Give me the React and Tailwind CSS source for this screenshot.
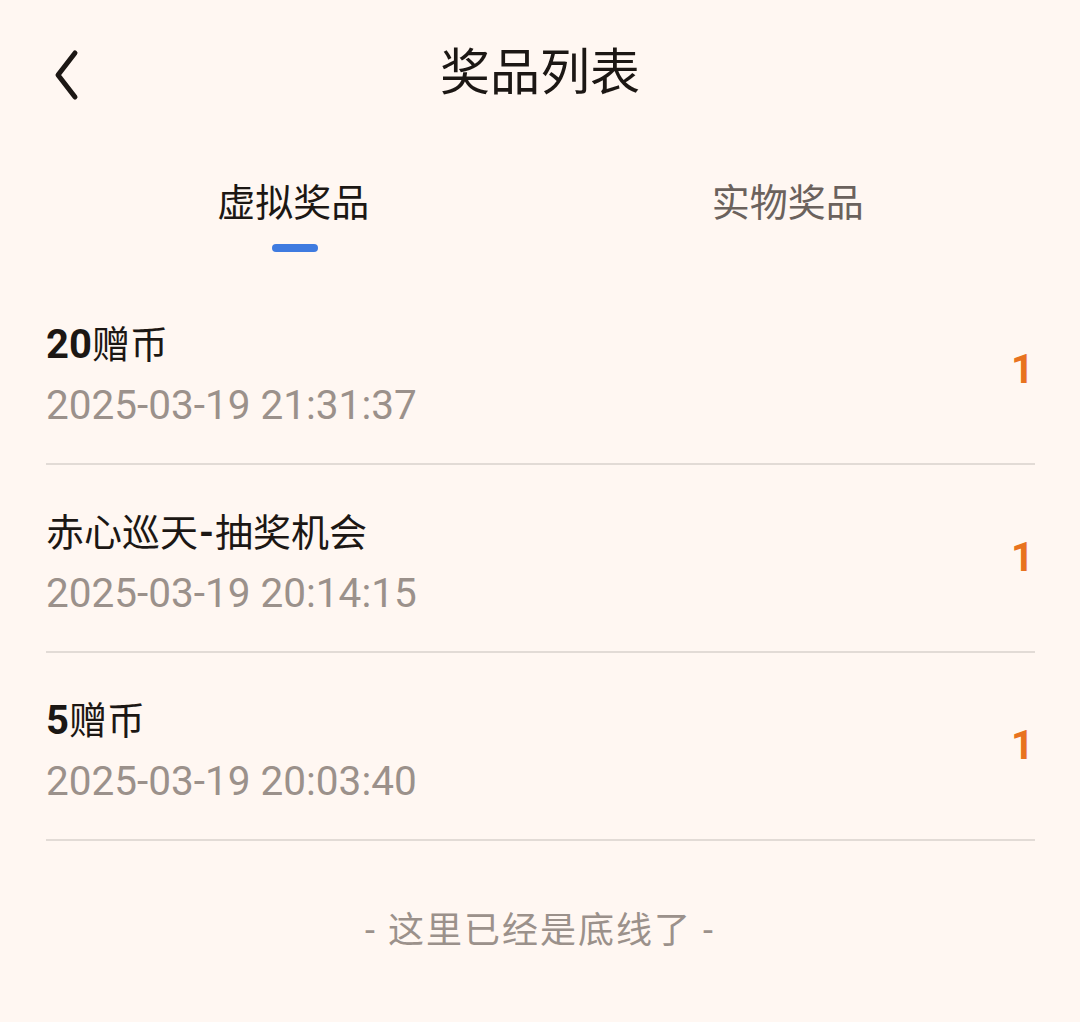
import React from 'react';

const prizes = [
  { num: '20', name: '赠币', time: '2025-03-19 21:31:37', count: 1 },
  { num: '', name: '赤心巡天-抽奖机会', time: '2025-03-19 20:14:15', count: 1 },
  { num: '5', name: '赠币', time: '2025-03-19 20:03:40', count: 1 },
];

const font = { fontFamily: 'Roboto, "Noto Sans CJK SC", sans-serif' };

// latin digits and dashes in the names are set bold, as the app does
function Name({ text }) {
  return text.split(/(-)/).map((part, i) =>
    part === '-' ? <b key={i} className="font-bold px-[1px]">-</b> : <span key={i}>{part}</span>
  );
}

export default function App() {
  return (
    <div className="min-h-[1022px] w-[1080px] bg-[#fff7f2] text-[#1c1714]" style={font}>
      {/* Header */}
      <header className="relative h-[146px] flex items-center justify-center">
        <button className="absolute left-[46px] top-[40px] w-[40px] h-[66px] flex items-center justify-center">
          <svg width="30" height="56" viewBox="0 0 30 56" fill="none">
            <path d="M24 8 L7 30 L24 52" stroke="#1c1714" strokeWidth="5" strokeLinecap="round" strokeLinejoin="round" />
          </svg>
        </button>
        <h1 className="text-[50px] leading-none font-normal text-[#1c1714]">奖品列表</h1>
      </header>

      {/* Tabs */}
      <div className="ml-[46px] mr-[45px] flex pt-[29px]">
        <div className="flex-1 flex flex-col items-center">
          <span className="h-[56px] leading-[56px] text-[38px] text-[#1c1714]">虚拟奖品</span>
          <span className="mt-[13px] ml-[4px] w-[46px] h-[8px] rounded-full bg-[#3f7be0]" />
        </div>
        <div className="flex-1 flex flex-col items-center">
          <span className="h-[56px] leading-[56px] text-[38px] text-[#6b625d]">实物奖品</span>
        </div>
      </div>

      {/* List */}
      <ul className="ml-[46px] mr-[45px] mt-[25px]">
        {prizes.map((p, i) => (
          <li key={i} className="h-[188px] border-b-2 border-[#e2dbd6] flex items-center justify-between">
            <div className="flex flex-col pt-[9px]">
              <span className="h-[48px] leading-[48px] text-[38px]">
                {p.num && <b className="font-bold text-[40px]">{p.num}</b>}
                <Name text={p.name} />
              </span>
              <span className="mt-[12px] h-[48px] leading-[48px] text-[40.5px] text-[#9b918b]">{p.time}</span>
            </div>
            <span className="mr-[1px] text-[40px] font-bold text-[#e8731f]">{p.count}</span>
          </li>
        ))}
      </ul>

      <p className="mt-[66px] text-center text-[36px] leading-[48px] text-[#9b918b] tracking-[2px]">- 这里已经是底线了 -</p>
    </div>
  );
}
